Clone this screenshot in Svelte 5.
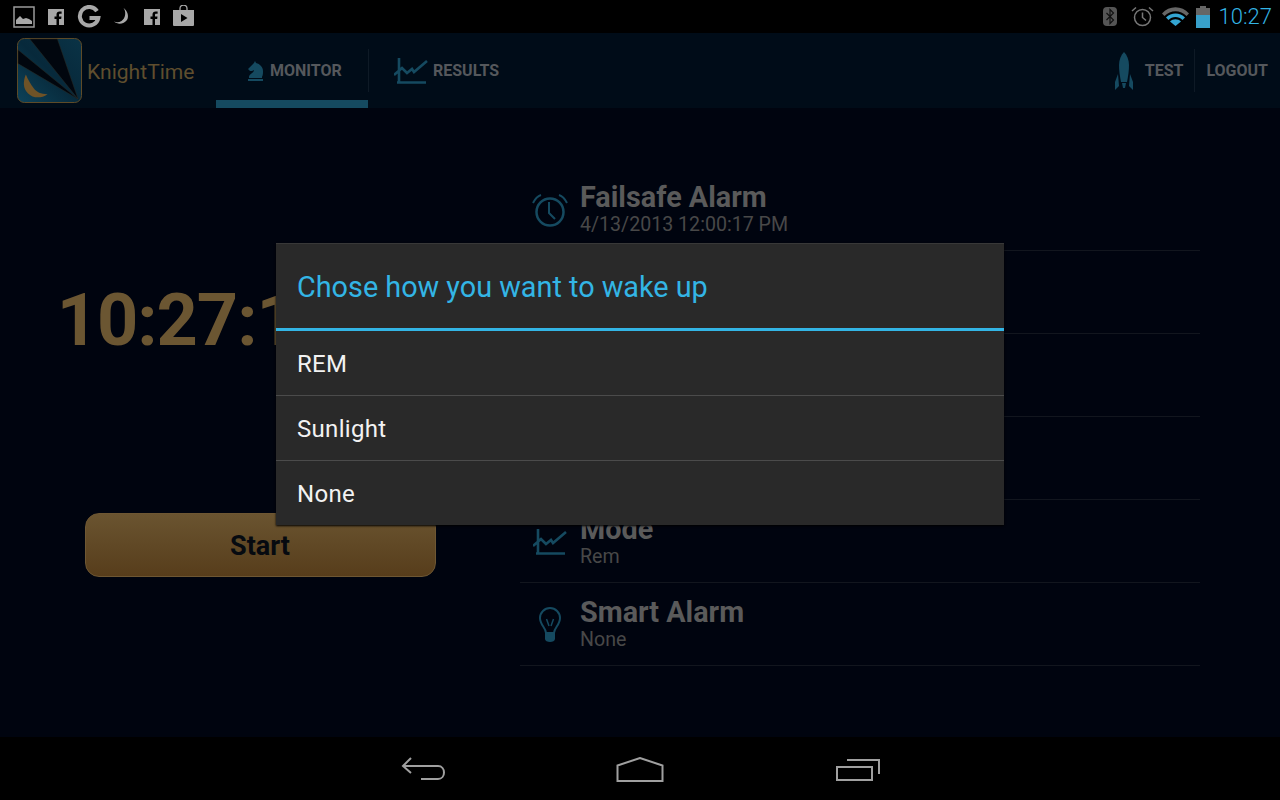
<script>
	const rows = [
		{ icon: 'alarm', title: 'Failsafe Alarm', sub: '4/13/2013 12:00:17 PM' },
		{ icon: '', title: '', sub: '' },
		{ icon: '', title: '', sub: '' },
		{ icon: '', title: '', sub: '' },
		{ icon: 'chart', title: 'Mode', sub: 'Rem' },
		{ icon: 'bulb', title: 'Smart Alarm', sub: 'None' }
	]
	const options = ['REM', 'Sunlight', 'None']
</script>

<div class="screen">
	<div class="status">
		<div class="status-left">
			<svg width="22" height="22" viewBox="0 0 22 22">
				<rect x="1" y="1" width="20" height="20" fill="none" stroke="#9a9a9a" stroke-width="1.5" />
				<path d="M3 18v-4l4-4 3 3 3-1 3 1 3 2v3z" fill="#a8a8a8" />
			</svg>
			<svg class="fb" width="16" height="16" viewBox="0 0 16 16">
				<path d="M0 0h16v16h-5v-6h2.200l.3-2.500H11V6c0-.8.3-1.200 1.200-1.200h1.400V2.600c-.6-.1-1.200-.1-2-.1-1.900 0-3.100 1.100-3.100 3.200v1.800H6.500V10h2v6H0z" fill="#a8a8a8" />
			</svg>
			<svg class="g" width="24" height="24" viewBox="0 0 24 24">
				<path d="M20 6.200A9.300 9.300 0 1 0 21.300 13H12.500" fill="none" stroke="#a8a8a8" stroke-width="4" />
			</svg>
			<svg class="moon" width="17" height="19" viewBox="0 0 17 19">
				<path d="M10.500 1c3 3.500 2 10.500-2 13-2.500 1.500-5 1.500-7.500.5 4 3.500 10 2.500 13-1.500 2.500-3.800 0-10-3.500-12z" fill="#a8a8a8" />
			</svg>
			<svg class="fb2" width="16" height="16" viewBox="0 0 16 16">
				<path d="M0 0h16v16h-5v-6h2.200l.3-2.500H11V6c0-.8.3-1.200 1.200-1.200h1.400V2.600c-.6-.1-1.200-.1-2-.1-1.900 0-3.100 1.100-3.100 3.200v1.800H6.500V10h2v6H0z" fill="#a8a8a8" />
			</svg>
			<svg class="store" width="21" height="21" viewBox="0 0 21 21">
				<path d="M7 5V3.500a3.500 3.500 0 0 1 7 0V5" fill="none" stroke="#a8a8a8" stroke-width="1.300" />
				<path fill-rule="evenodd" d="M0 5h21v15a1 1 0 0 1-1 1H1a1 1 0 0 1-1-1zM8 9v8l6.500-4z" fill="#a8a8a8" />
			</svg>
		</div>
		<div class="status-right">
			<svg width="14" height="19" viewBox="0 0 14 19">
				<rect width="14" height="19" rx="4" fill="#555" />
				<path d="M3.500 6l7 7-3.500 3.500v-14l3.500 3.500-7 7" fill="none" stroke="#111" stroke-width="1.200" />
			</svg>
			<svg class="st-alarm" width="23" height="21" viewBox="0 0 23 21">
				<circle cx="11.500" cy="11.500" r="8" fill="none" stroke="#777" stroke-width="1.500" />
				<path d="M11.500 6.500v5l3.500 3M1 5l4-3.500M22 5l-4-3.500" fill="none" stroke="#777" stroke-width="1.500" />
			</svg>
			<svg class="st-wifi" width="27" height="19" viewBox="0 0 27 19">
				<path d="M0 6.500C7-1.800 20-1.800 27 6.500L24.500 9C18.500 2.500 8.500 2.500 2.500 9z" fill="#666" />
				<path d="M4 10.500c5-5.500 14-5.500 19 0l-2.500 2.500c-3.500-4-10.500-4-14 0zM8 14.500c3-3 8-3 11 0l-5.500 4.500z" fill="#33a5d2" />
			</svg>
			<svg class="st-batt" width="14" height="22" viewBox="0 0 14 22">
				<path d="M4 0h6v2h4v7H0V2h4z" fill="#666" />
				<rect y="9" width="14" height="13" fill="#38a0ca" />
			</svg>
			<span class="clock">10:27</span>
		</div>
	</div>

	<div class="window">
		<header class="appbar">
			<svg class="logo" width="65" height="65" viewBox="0 0 66 66">
				<defs>
					<linearGradient id="logoBg" x1="0" y1="1" x2="1" y2="0">
						<stop offset="0" stop-color="#0d4258" />
						<stop offset="0.5" stop-color="#07293b" />
						<stop offset="1" stop-color="#0a3346" />
					</linearGradient>
				</defs>
				<rect x="0.500" y="0.500" width="65" height="65" rx="7" fill="url(#logoBg)" stroke="#5f4c28" />
				<path d="M13 1h28l21 61zM1 12v14l61 36z" fill="#01060e" stroke="#2c2a22" stroke-width="0.500" />
				<path d="M9 37c-3 7-3 14 2 19 5 5 13 6 20 1-7 0-11-2-14-6-3-4-6-9-8-14z" fill="#6f5327" />
			</svg>
			<span class="brand">KnightTime</span>
			<div class="tab active">
				<svg width="16" height="20" viewBox="0 0 16 20">
					<path d="M1 17v-1c0-3 5-4 5-7-1 1-3 1-4 1L0 8l6-6 1-2 1 2c4 1 7 4 7 8 0 2 0 4-1 6 0 0 0 1 0 1zM0 18h15v2H0z" fill="#154a60" />
				</svg>
				<span>MONITOR</span>
			</div>
			<span class="sep"></span>
			<div class="tab second">
				<svg width="34" height="26" viewBox="0 0 34 26">
					<path d="M5 0v25M3 24.500h29M0 17l8-7 5 5 5-4 2 3 13-11" fill="none" stroke="#154a60" stroke-width="2.600" />
				</svg>
				<span>RESULTS</span>
			</div>
			<div class="actions">
				<svg class="rocket" width="18" height="38" viewBox="0 0 18 38">
					<path d="M9 0c3 3 5 8 5 13 0 6-1 12-2 17H6C5 25 4 19 4 13 4 8 6 3 9 0z" fill="#154a60" />
					<path d="M3 22L0 30v8l4-4zM15 22l3 8v8l-4-4zM7 31h4l-1 5H8z" fill="#154a60" />
				</svg>
				<span class="action test">TEST</span>
				<span class="action logout">LOGOUT</span>
			</div>
		</header>

		<main class="content">
			<section class="monitor">
				<div class="time">10:27:17 AM</div>
				<button class="start">Start</button>
			</section>
			<section class="list">
				{#each rows as row}
					<div class="row">
						<div class="row-icon">
							{#if row.icon === 'alarm'}
								<svg width="36" height="34" viewBox="0 0 36 34">
									<circle cx="18" cy="19" r="13.500" fill="none" stroke="#154a60" stroke-width="2.500" />
									<path d="M17 9v11l6 6M1 10c2-4 5-7 8-8M35 10c-2-4-5-7-8-8" fill="none" stroke="#154a60" stroke-width="2" />
								</svg>
							{:else if row.icon === 'chart'}
								<svg width="34" height="26" viewBox="0 0 34 26">
									<path d="M5 0v25M3 24.500h29M0 17l8-7 5 5 5-4 2 3 13-11" fill="none" stroke="#154a60" stroke-width="2.600" />
								</svg>
							{:else if row.icon === 'bulb'}
								<svg width="24" height="38" viewBox="0 0 24 38">
									<path d="M8 27c0-5-6-8-6-15a10 10 0 0 1 20 0c0 7-6 10-6 15z" fill="none" stroke="#154a60" stroke-width="2" />
									<path d="M8.500 13l2.500 7M15.500 13l-2.500 7" fill="none" stroke="#154a60" stroke-width="1.500" />
									<path d="M7 28h10v5c0 4-10 4-10 0z" fill="#154a60" />
								</svg>
							{/if}
						</div>
						<div class="row-text">
							<div class="row-title">{row.title}</div>
							<div class="row-sub">{row.sub}</div>
						</div>
					</div>
				{/each}
			</section>
		</main>

		<div class="dialog">
			<div class="dialog-title">Chose how you want to wake up</div>
			{#each options as option}
				<div class="option">{option}</div>
			{/each}
		</div>
	</div>

	<nav class="navbar">
		<svg width="44" height="24" viewBox="0 0 44 24">
			<path d="M10 1L2 9l8 7M3 9h34c8 0 8 13 0 13H20" fill="none" stroke="#a0a0a0" stroke-width="2" />
		</svg>
		<svg width="48" height="25" viewBox="0 0 48 25">
			<path d="M1.500 24V8.500L24 1l22.500 7.500V24z" fill="none" stroke="#a0a0a0" stroke-width="2" />
		</svg>
		<svg width="46" height="23" viewBox="0 0 46 23">
			<path d="M2 9h35v13H2zM12 2h32v14" fill="none" stroke="#a0a0a0" stroke-width="2" />
		</svg>
	</nav>
</div>

<style>
	:global(body) {
		margin: 0;
		background: #000;
		font-family: Roboto, sans-serif;
	}

	.screen {
		display: flex;
		flex-direction: column;
		width: 1280px;
		height: 800px;
		overflow: hidden;
	}

	.status {
		display: flex;
		justify-content: space-between;
		align-items: center;
		height: 33px;
		flex: none;
		background: #000;
	}

	.status-left {
		display: flex;
		align-items: center;
		padding-left: 13px;
	}

	.fb {
		margin-left: 13px;
	}

	.g {
		margin-left: 13px;
	}

	.moon {
		margin-left: 12px;
	}

	.fb2 {
		margin-left: 14px;
	}

	.store {
		margin-left: 13px;
		margin-bottom: 2px;
	}

	.status-right {
		display: flex;
		align-items: center;
		padding-right: 8px;
	}

	.st-alarm {
		margin-left: 14px;
	}

	.st-wifi {
		margin-left: 8px;
	}

	.st-batt {
		margin-left: 7px;
	}

	.clock {
		margin-left: 9px;
		color: #33b5e5;
		font-size: 22px;
		font-weight: 300;
		line-height: 33px;
	}

	.window {
		position: relative;
		display: flex;
		flex-direction: column;
		flex: 1;
		min-height: 0;
		background: #00040f;
	}

	.appbar {
		display: flex;
		align-items: center;
		height: 75px;
		flex: none;
		padding-left: 17px;
		background: #000c18;
	}

	.logo {
		flex: none;
	}

	.brand {
		width: 129px;
		margin-left: 5px;
		margin-top: 1px;
		color: #5f4e2e;
		font-size: 21.100px;
	}

	.tab {
		display: flex;
		align-items: center;
		height: 75px;
		box-sizing: border-box;
		color: #55585c;
		font-size: 16px;
		font-weight: 700;
	}

	.tab.active {
		width: 152px;
		padding-left: 32px;
		box-shadow: inset 0 -8px 0 #154a60;
		gap: 6px;
	}

	.tab.second {
		margin-left: 25px;
		gap: 5px;
	}

	.sep {
		width: 1px;
		height: 43px;
		flex: none;
		background: #0e1a26;
	}

	.actions {
		display: flex;
		align-items: center;
		margin-left: auto;
		height: 75px;
	}

	.rocket {
		margin-right: 12px;
	}

	.action {
		color: #55585c;
		font-size: 16px;
		font-weight: 700;
	}

	.test {
		padding-right: 11px;
		height: 43px;
		line-height: 43px;
		border-right: 1px solid #0e1a26;
	}

	.logout {
		padding: 0 12px 0 11px;
	}

	.content {
		display: flex;
		flex: 1;
		min-height: 0;
	}

	.monitor {
		display: flex;
		flex-direction: column;
		align-items: center;
		width: 520px;
		flex: none;
	}

	.time {
		margin-top: 170px;
		color: #6b5632;
		font-size: 72px;
		font-weight: 700;
		letter-spacing: -1px;
		line-height: 86px;
		white-space: nowrap;
	}

	.start {
		width: 351px;
		height: 64px;
		margin-top: 149px;
		padding-top: 3px;
		border: 1px solid #6e5733;
		border-radius: 14px;
		background: linear-gradient(#6a5430, #573d1b);
		color: #060a10;
		font-family: inherit;
		font-size: 27px;
		font-weight: 700;
	}

	.list {
		width: 680px;
		padding-top: 60px;
	}

	.row {
		display: flex;
		align-items: center;
		height: 83px;
		box-sizing: border-box;
		border-bottom: 1px solid #12161e;
	}

	.row-icon {
		display: flex;
		justify-content: center;
		width: 60px;
		flex: none;
		padding-top: 2px;
	}

	.row-title {
		margin-bottom: 2px;
		color: #5a5a5a;
		font-size: 28.800px;
		font-weight: 700;
		line-height: 30px;
	}

	.row-sub {
		color: #484848;
		font-size: 19.600px;
		line-height: 22px;
	}

	.dialog {
		position: absolute;
		left: 276px;
		top: 210px;
		width: 728px;
		height: 282px;
		background: #292929;
		border-top: 1px solid #383838;
		box-sizing: border-box;
		box-shadow: 0 1px 2px #000;
	}

	.dialog-title {
		height: 84px;
		padding-left: 21px;
		border-bottom: 3px solid #33b5e5;
		color: #33b5e5;
		font-size: 28.800px;
		line-height: 86px;
	}

	.option {
		height: 65px;
		box-sizing: border-box;
		padding: 1px 0 0 21px;
		border-bottom: 1px solid #4b4b4b;
		color: #f2f2f2;
		font-size: 24px;
		letter-spacing: 0.300px;
		line-height: 64px;
	}

	.option:last-child {
		border-bottom: 0;
	}

	.navbar {
		display: flex;
		justify-content: center;
		align-items: center;
		gap: 171px;
		height: 63px;
		flex: none;
		padding: 1px 0 0 2px;
		box-sizing: border-box;
		background: #000;
	}
</style>
